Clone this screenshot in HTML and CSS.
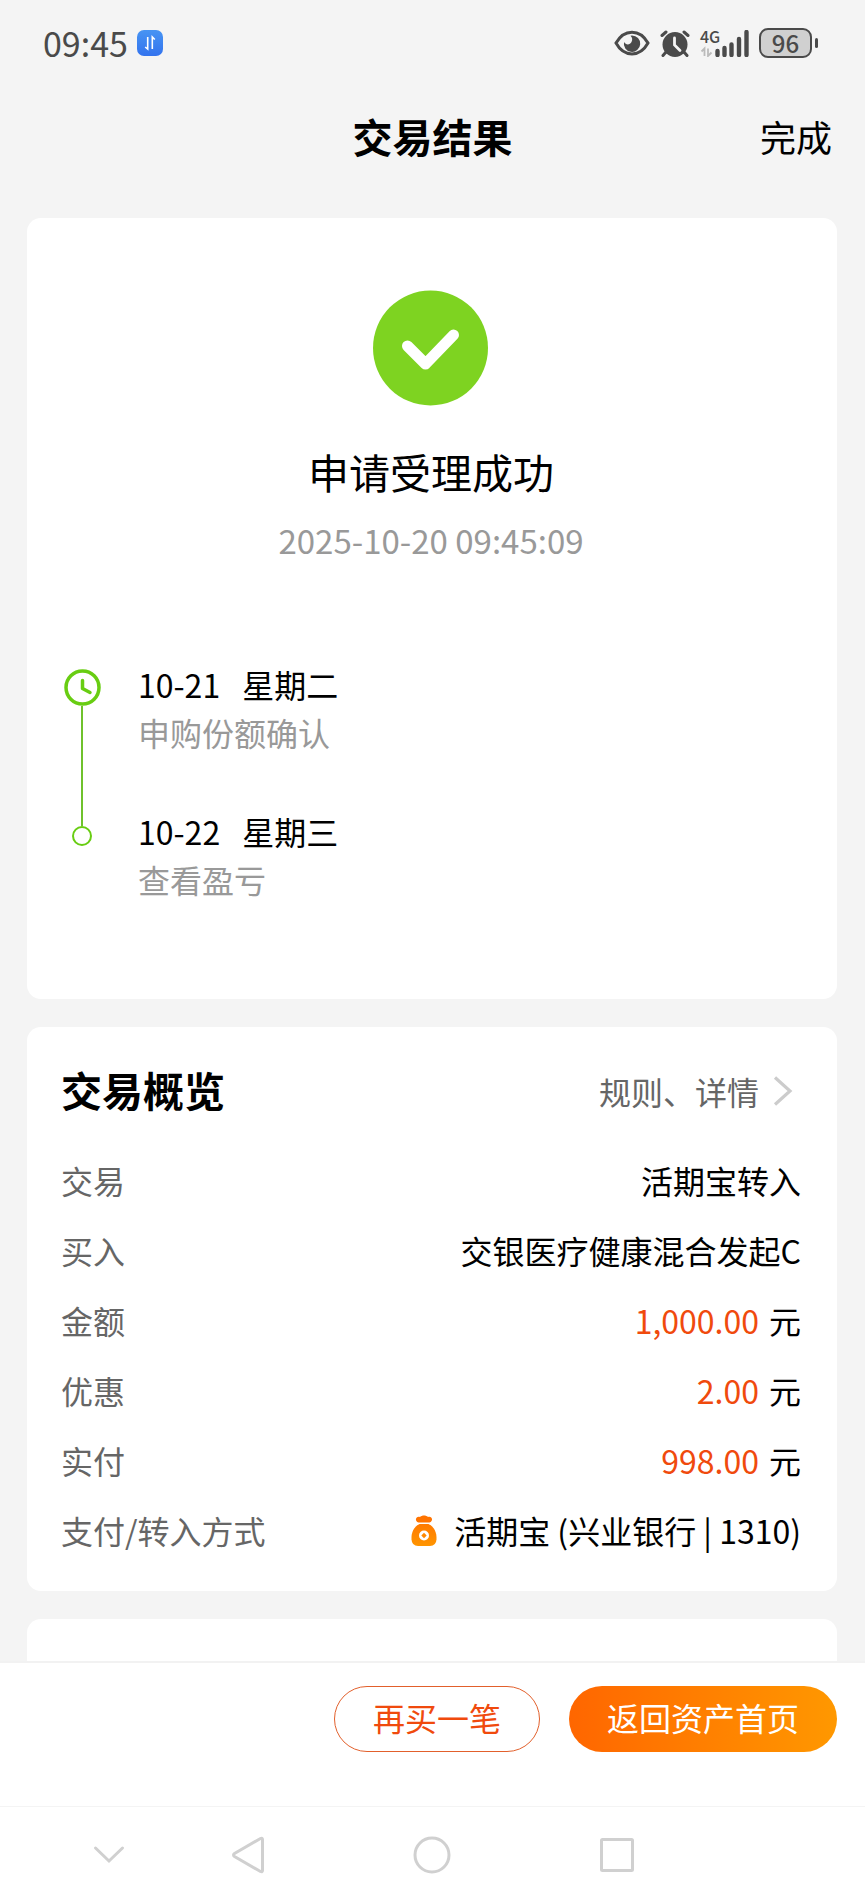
FILE: index.html
```html
<!DOCTYPE html>
<html lang="zh-CN">
<head>
<meta charset="utf-8">
<meta name="viewport" content="width=device-width, initial-scale=1">
<title>交易结果</title>
<link rel="stylesheet" href="styles.css">
</head>
<body>
<div class="status">
  <span class="status-time">09:45</span>
  <svg class="status-app" width="26" height="26" viewBox="0 0 26 26" aria-hidden="true">
    <defs><linearGradient id="blue" x1="0" y1="0" x2="0" y2="1"><stop offset="0" stop-color="#4794f3"/><stop offset="1" stop-color="#3373ee"/></linearGradient></defs>
    <rect width="26" height="26" rx="7" fill="url(#blue)"/>
    <path d="M10.700 7v12l-2.500-2M15.300 19V7l2.500 2.500" fill="none" stroke="#fff" stroke-width="1.600"/>
  </svg>
  <div class="status-right">
    <svg width="36" height="26" viewBox="0 0 36 26" aria-hidden="true">
      <path d="M2 13C10-1.500 26-1.500 34 13C26 27.500 10 27.500 2 13Z" fill="none" stroke="#4a4a4a" stroke-width="3"/>
      <path d="M18 5.500A8.200 8.200 0 1 1 10 12c2 3.500 6 3 7.500 0c1.200-2.500 1-4.500-1-6.300Z" fill="#4a4a4a"/>
    </svg>
    <svg width="30" height="27" viewBox="0 0 30 27" aria-hidden="true">
      <circle cx="15" cy="14.500" r="12.500" fill="#4a4a4a"/>
      <path d="M2 5.500l4-3.500M28 5.500l-4-3.500M6 22l-3 3.500M24 22l3 3.500" stroke="#4a4a4a" stroke-width="3" stroke-linecap="round"/>
      <path d="M14.500 8v7l5.500 5.500" fill="none" stroke="#f4f4f4" stroke-width="2.800" stroke-linecap="round"/>
    </svg>
    <div class="signal">
      <span class="signal-net">4G</span>
      <svg width="49" height="27" viewBox="0 0 49 27" aria-hidden="true">
        <path d="M4.500 26v-7.500l-3 3M8 18.500V26l3.500-3.500" fill="none" stroke="#bbb" stroke-width="1.800"/>
        <path d="M17.500 21v4M24.500 18v7M31.500 14.500v10.500M39 9v16M46.500 2v23" stroke="#4a4a4a" stroke-width="4.400" stroke-linecap="round"/>
      </svg>
    </div>
    <div class="battery"><span class="battery-level">96</span><span class="battery-tip"></span></div>
  </div>
</div>

<header class="header">
  <span></span>
  <h1 class="header-title">交易结果</h1>
  <button class="header-done" type="button">完成</button>
</header>

<main class="main">
  <section class="card result">
    <svg width="116" height="116" viewBox="0 0 116 116" role="img" aria-label="成功">
      <circle cx="57.500" cy="58" r="57.500" fill="#7ed321"/>
      <path d="M34.500 56l18 18l28-29" fill="none" stroke="#fff" stroke-width="11" stroke-linecap="round" stroke-linejoin="round"/>
    </svg>
    <h2 class="result-title">申请受理成功</h2>
    <time class="result-time">2025-10-20 09:45:09</time>
    <ol class="timeline">
      <li class="step">
        <div class="rail">
          <svg class="rail-clock" width="37" height="37" viewBox="0 0 37 37" aria-hidden="true">
            <circle cx="18.500" cy="18.500" r="16.500" fill="none" stroke="#68cd12" stroke-width="3.500"/>
            <path d="M18.500 11.500v8l7.500 4" fill="none" stroke="#68cd12" stroke-width="3.500" stroke-linecap="round" stroke-linejoin="round"/>
          </svg>
          <span class="rail-line"></span>
        </div>
        <div class="step-text">
          <p class="step-date"><span>10-21</span><span>星期二</span></p>
          <p class="step-note">申购份额确认</p>
        </div>
      </li>
      <li class="step">
        <div class="rail">
          <span class="rail-join"></span>
          <span class="rail-dot"></span>
        </div>
        <div class="step-text">
          <p class="step-date"><span>10-22</span><span>星期三</span></p>
          <p class="step-note">查看盈亏</p>
        </div>
      </li>
    </ol>
  </section>

  <section class="card overview">
    <div class="overview-head">
      <h2 class="overview-title">交易概览</h2>
      <a class="overview-link" href="#">规则、详情
        <svg width="20" height="30" viewBox="0 0 20 30" aria-hidden="true"><path d="M2 1.500L17 15L2 28.500" fill="none" stroke="#ccc" stroke-width="3.200"/></svg>
      </a>
    </div>
    <dl class="rows">
      <div class="row"><dt>交易</dt><dd>活期宝转入</dd></div>
      <div class="row"><dt>买入</dt><dd>交银医疗健康混合发起C</dd></div>
      <div class="row"><dt>金额</dt><dd><span class="money">1,000.00</span>元</dd></div>
      <div class="row"><dt>优惠</dt><dd><span class="money">2.00</span>元</dd></div>
      <div class="row"><dt>实付</dt><dd><span class="money">998.00</span>元</dd></div>
      <div class="row"><dt>支付/转入方式</dt><dd>
        <svg class="bag" width="26" height="31" viewBox="0 0 26 31" aria-hidden="true">
          <defs><linearGradient id="bag" x1="0" y1="0" x2="0" y2="1"><stop offset="0" stop-color="#ff7a00"/><stop offset="1" stop-color="#ff9500"/></linearGradient></defs>
          <path d="M7.500 7.500C3 6 5 .5 9 2C11 0 15 0 17 2C21 .5 23 6 18.500 7.500Z" fill="#ff7300"/>
          <path d="M8.500 9h9C23 11.500 26 17.500 25.500 24.500Q25 31 19 31H7Q1 31 .5 24.500C0 17.500 3 11.500 8.500 9Z" fill="url(#bag)"/>
          <circle cx="13" cy="20.500" r="5" fill="#fff"/>
          <path d="M13 17.800l2.700 2.700l-2.700 2.700l-2.700-2.700Z" fill="#ff8800"/>
        </svg>活期宝 (兴业银行 | 1310)</dd></div>
    </dl>
  </section>

  <section class="card next" aria-hidden="true"></section>
</main>

<footer class="footer">
  <div class="actions">
    <button class="btn btn-line" type="button">再买一笔</button>
    <button class="btn btn-fill" type="button">返回资产首页</button>
  </div>
  <nav class="nav" aria-label="系统导航">
    <button class="nav-btn" type="button" aria-label="收起"><svg width="32" height="20" viewBox="0 0 32 20"><path d="M2.500 3L16 16L29.500 3" stroke-linecap="round"/></svg></button>
    <button class="nav-btn" type="button" aria-label="返回"><svg width="34" height="38" viewBox="0 0 34 38"><path d="M31.500 3.500v31q0 2-2 1L3.500 20.500q-2-1.500 0-3L29.500 2.500q2-1 2 1Z"/></svg></button>
    <button class="nav-btn" type="button" aria-label="主页"><svg width="38" height="38" viewBox="0 0 38 38"><circle cx="19" cy="19" r="17"/></svg></button>
    <button class="nav-btn" type="button" aria-label="最近任务"><svg width="34" height="34" viewBox="0 0 34 34"><rect x="1.500" y="1.500" width="31" height="31" rx="1"/></svg></button>
  </nav>
</footer>
</body>
</html>
```
FILE: styles.css
```css
* {
  box-sizing: border-box;
}

body {
  margin: 0;
  min-height: 100vh;
  display: flex;
  flex-direction: column;
  background: #f4f4f4;
  color: #000;
  font-family: "Noto Sans CJK SC", sans-serif;
  font-size: 32px;
  line-height: 46px;
}

h1, h2, p, ol, dl, dd {
  margin: 0;
  padding: 0;
}

button {
  padding: 0;
  border: 0;
  background: none;
  color: inherit;
  font: inherit;
}

svg {
  flex: none;
}

/* status bar */
.status {
  display: flex;
  align-items: center;
  height: 86px;
  padding: 0 47px 0 43px;
  color: #4a4a4a;
}

.status-time {
  font-size: 34px;
}

.status-app {
  margin-left: 9px;
}

.status-right {
  display: flex;
  align-items: center;
  gap: 10px;
  margin-left: auto;
}

.signal {
  position: relative;
  display: flex;
}

.signal-net {
  position: absolute;
  top: -2px;
  left: 0;
  font-size: 16px;
  font-weight: 500;
  line-height: 16px;
}

.battery {
  display: flex;
  align-items: center;
  gap: 3px;
}

.battery-level {
  width: 53px;
  border: 2px solid #4a4a4a;
  border-radius: 9px;
  background: #d0d0d0;
  font-size: 24px;
  font-weight: 500;
  line-height: 26px;
  text-align: center;
}

.battery-tip {
  width: 3px;
  height: 10px;
  border-radius: 2px;
  background: #4a4a4a;
}

/* page header */
.header {
  display: grid;
  grid-template-columns: 1fr auto 1fr;
  align-items: center;
  padding: 22px 33px 54px;
  line-height: 56px;
}

.header-title {
  font-size: 40px;
  font-weight: 700;
}

.header-done {
  justify-self: end;
  font-size: 36px;
}

/* cards */
.main {
  flex: 1;
  display: flex;
  flex-direction: column;
  gap: 28px;
  padding: 0 28px 0 27px;
}

.card {
  padding: 0 36px 0 34px;
  border-radius: 14px;
  background: #fff;
}

.result {
  display: flex;
  flex-direction: column;
  align-items: center;
  padding-top: 72px;
  padding-bottom: 96px;
}

.result-title {
  margin-top: 35px;
  font-size: 41px;
  font-weight: 400;
  line-height: 60px;
}

.result-time {
  margin-top: 17px;
  color: #999;
  font-size: 33px;
  line-height: 44px;
}

.timeline {
  align-self: stretch;
  margin-top: 98px;
  padding-left: 2px;
  line-height: 48px;
  list-style: none;
}

.step {
  display: flex;
  gap: 37px;
}

.step-text {
  padding-bottom: 51px;
}

.step:last-child .step-text {
  padding-bottom: 0;
}

.step-date {
  display: flex;
  gap: 22px;
}

.step-note {
  color: #999;
}

.rail {
  display: flex;
  flex-direction: column;
  align-items: center;
  width: 38px;
}

.rail-clock {
  margin-top: 9px;
}

.rail-line,
.rail-join {
  width: 2px;
  background: #6fc22c;
}

.rail-line {
  flex: 1;
}

.rail-join {
  height: 19px;
}

.rail-dot {
  width: 20px;
  height: 20px;
  border: 2px solid #68cd12;
  border-radius: 50%;
}

.overview {
  padding-top: 34px;
  padding-bottom: 38px;
}

.overview-head {
  display: flex;
  align-items: center;
  justify-content: space-between;
}

.overview-title {
  font-size: 41px;
  line-height: 56px;
}

.overview-link {
  display: flex;
  align-items: center;
  gap: 14px;
  padding-top: 4px;
  padding-right: 8px;
  color: #666;
  text-decoration: none;
}

.rows {
  display: flex;
  flex-direction: column;
  gap: 24px;
  margin-top: 40px;
}

.row {
  display: flex;
  justify-content: space-between;
}

.row dt {
  color: #666;
}

.row dd {
  display: flex;
  align-items: center;
}

.money {
  margin-right: 10px;
  color: #f04a0d;
}

.bag {
  margin-right: 17px;
}

.next {
  flex: 1;
  min-height: 41px;
  border-radius: 14px 14px 0 0;
}

/* bottom bar */
.footer {
  position: sticky;
  bottom: 0;
  border-top: 2px solid #f2f2f2;
  background: #fff;
}

.actions {
  display: flex;
  justify-content: flex-end;
  gap: 29px;
  padding: 23px 28px 54px;
}

.btn {
  height: 66px;
  padding: 0 38px 5px;
  border-radius: 33px;
}

.btn-line {
  border: 1px solid #e2602c;
  color: #f04a0d;
}

.btn-fill {
  background: linear-gradient(90deg, #ff6600, #ff9800);
  color: #fff;
}

.nav {
  display: grid;
  grid-template-columns: 139fr 140fr 228fr 141fr 178fr;
  height: 96px;
  padding-left: 39px;
  border-top: 1px solid #f4f4f4;
}

.nav-btn {
  display: flex;
  align-items: center;
  justify-content: center;
}

.nav-btn svg {
  fill: none;
  stroke: #d0d0d0;
  stroke-width: 3;
}
```
